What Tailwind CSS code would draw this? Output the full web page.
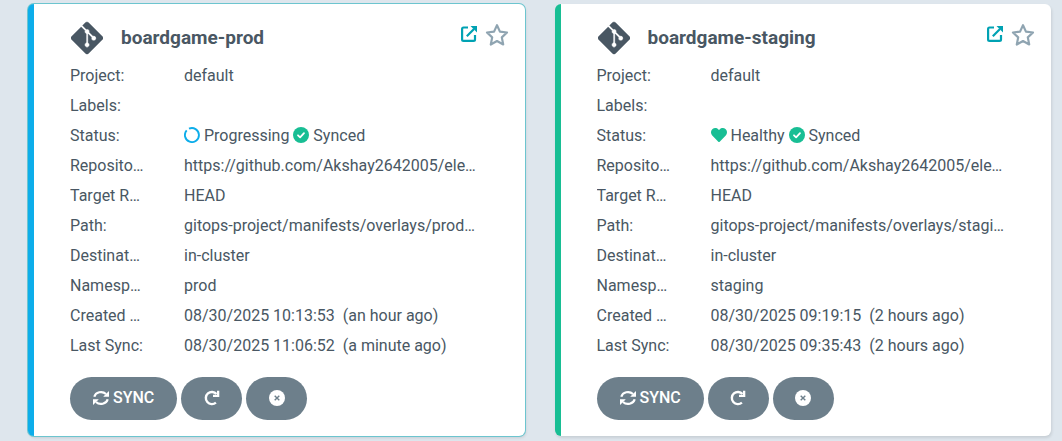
<!DOCTYPE html>
<html lang="en">
<head>
<meta charset="utf-8">
<meta name="viewport" content="width=device-width, initial-scale=1">
<title>Applications</title>
<script src="https://cdn.jsdelivr.net/npm/@tailwindcss/browser@4"></script>
</head>
<body class="min-h-screen bg-[#dee6ed] font-['Roboto',sans-serif] text-base text-[#495763]">
<svg class="hidden" aria-hidden="true">
  <symbol id="git" viewBox="0 32 448 448"><path fill="currentColor" stroke="currentColor" stroke-width="6" d="M439.55 236.05L244 40.45a28.87 28.87 0 0 0-40.81 0l-40.66 40.63 51.52 51.52c27.06-9.14 52.68 16.77 43.39 43.68l49.66 49.66c34.23-11.8 61.18 31 35.47 56.69-26.49 26.49-70.21-2.87-56-37.34L240.22 199v121.85c25.3 12.54 22.26 41.85 9.08 55a34.34 34.34 0 0 1-48.55 0c-17.57-17.6-11.07-46.91 11.25-56v-123c-20.8-8.51-24.6-30.74-18.64-45L142.57 101 8.45 235.14a28.86 28.86 0 0 0 0 40.81l195.61 195.6a28.86 28.86 0 0 0 40.8 0l194.69-194.69a28.86 28.86 0 0 0 0-40.81z"/></symbol>
  <symbol id="external" viewBox="0 0 16 16"><path fill="none" stroke="currentColor" stroke-width="2.200" stroke-linejoin="round" d="M7 1.500H2.500Q1.100 1.500 1.100 3V13.500Q1.100 14.900 2.500 14.900H12.500Q14 14.900 14 13.500V9M5.800 10.200L13 3"/><path fill="currentColor" d="M9.500 0H16V6.500z"/></symbol>
  <symbol id="star" viewBox="0 0 22 22"><path fill="none" stroke="currentColor" stroke-width="2" stroke-linejoin="round" d="M11 2L13.700 7.900L20.200 8.700L15.400 13.200L16.700 19.700L11 16.500L5.300 19.700L6.600 13.200L1.800 8.700L8.300 7.900z"/></symbol>
  <symbol id="check" viewBox="0 0 16 16"><circle cx="8" cy="8" r="8" fill="currentColor"/><path fill="none" stroke="#fff" stroke-width="1.800" stroke-linecap="round" stroke-linejoin="round" d="M5 8.300L7.100 10.300L11 6.200"/></symbol>
  <symbol id="ring" viewBox="0 0 16 16"><path fill="none" stroke="currentColor" stroke-width="1.900" d="M5 1.700A7 7 0 1 1 2.700 3.400"/></symbol>
  <symbol id="heart" viewBox="0 32 512 448"><path fill="currentColor" d="M462.300 62.600C407.500 15.900 326 24.300 275.700 76.200L256 96.500l-19.700-20.300C186.100 24.300 104.500 15.900 49.700 62.600c-62.800 53.600-66.100 149.800-9.900 207.900l193.500 199.800c12.500 12.900 32.800 12.900 45.300 0l193.500-199.800c56.300-58.100 53-154.300-9.800-207.900z"/></symbol>
  <symbol id="sync" viewBox="0 0 16 16"><path fill="none" stroke="currentColor" stroke-width="2.200" d="M1.300 6.800A6.900 6.200 0 0 1 13 4M14.700 9.200A6.900 6.200 0 0 1 3 12"/><path fill="currentColor" d="M16 1V6.800H10.200zM0 15V9.200H5.800z"/></symbol>
  <symbol id="refresh" viewBox="0 0 16 16"><path fill="none" stroke="currentColor" stroke-width="2.400" d="M12.500 4A6.100 6.100 0 1 0 11.900 12.700"/><path fill="currentColor" d="M13 .8H15.300V7H9V4.800H13z"/></symbol>
  <symbol id="cancel" viewBox="0 0 16 16"><circle cx="8" cy="8" r="8" fill="currentColor"/><path stroke="#6d7f8b" stroke-width="1.400" d="M5.700 5.700L10.300 10.300M10.300 5.700L5.700 10.300"/></symbol>
</svg>

<main id="apps" class="grid grid-cols-2 gap-[30px] pt-1 pr-[11px] pb-1 pl-7"></main>

<template id="card">
  <article class="min-w-0 rounded-md border-l-6 bg-white pt-4 pr-4 pb-4 pl-9 shadow-[1px_2px_3px_rgba(0,0,0,0.1)]">
    <header class="flex items-center pb-1">
      <svg class="h-9 w-[34px] shrink-0 px-px"><use href="#git"/></svg>
      <h2 class="ml-[17px] flex-1 truncate text-[19px] leading-9 font-bold" data-f="name"></h2>
      <a href="#" aria-label="Open application" class="mb-2 text-[#00a2b3]"><svg class="size-4"><use href="#external"/></svg></a>
      <button type="button" aria-label="Add to favorites" class="mb-1.5 ml-2 text-[#8fa4b1]"><svg class="size-6"><use href="#star"/></svg></button>
    </header>
    <dl class="pt-px"></dl>
    <div class="mt-4 flex gap-1 text-white">
      <button type="button" class="flex h-[43px] items-center gap-1 rounded-full bg-[#6d7f8b] px-[23px] pb-0.5 font-medium"><svg class="size-4"><use href="#sync"/></svg>SYNC</button>
      <button type="button" aria-label="Refresh" class="flex h-[43px] w-[61px] items-center justify-center rounded-full bg-[#6d7f8b] pb-0.5"><svg class="size-4"><use href="#refresh"/></svg></button>
      <button type="button" aria-label="Delete" class="flex h-[43px] w-[61px] items-center justify-center rounded-full bg-[#6d7f8b] pb-0.5"><svg class="size-4"><use href="#cancel"/></svg></button>
    </div>
  </article>
</template>

<script>
const synced = '<svg class="mb-1 inline size-4 text-[#18be94]"><use href="#check"/></svg> Synced';
const apps = [
  { name: 'boardgame-prod', frame: 'border-[#0dadea] ring-1 ring-[#6cc5cf]', rows: [
    ['Project:', 'default'], ['Labels:', ''],
    ['Status:', '<svg class="mb-1 inline size-4 text-[#0dadea]"><use href="#ring"/></svg> Progressing ' + synced],
    ['Reposito…', 'https://github.com/Akshay2642005/ele…'], ['Target R…', 'HEAD'],
    ['Path:', 'gitops-project/manifests/overlays/prod…'], ['Destinat…', 'in-cluster'], ['Namesp…', 'prod'],
    ['Created …', '08/30/2025 10:13:53 &nbsp;(an hour ago)'], ['Last Sync:', '08/30/2025 11:06:52 &nbsp;(a minute ago)']] },
  { name: 'boardgame-staging', frame: 'border-[#18be94]', rows: [
    ['Project:', 'default'], ['Labels:', ''],
    ['Status:', '<svg class="mb-1 inline size-4 text-[#18be94]"><use href="#heart"/></svg> Healthy ' + synced],
    ['Reposito…', 'https://github.com/Akshay2642005/ele…'], ['Target R…', 'HEAD'],
    ['Path:', 'gitops-project/manifests/overlays/stagi…'], ['Destinat…', 'in-cluster'], ['Namesp…', 'staging'],
    ['Created …', '08/30/2025 09:19:15 &nbsp;(2 hours ago)'], ['Last Sync:', '08/30/2025 09:35:43 &nbsp;(2 hours ago)']] }
];
for (const app of apps) {
  const node = document.getElementById('card').content.cloneNode(true);
  node.querySelector('article').className += ' ' + app.frame;
  node.querySelector('[data-f=name]').textContent = app.name;
  node.querySelector('dl').innerHTML = app.rows.map(([k, v]) =>
    `<div class="flex h-[30px] items-center"><dt class="w-[75px] shrink-0 truncate">${k}</dt><dd class="mr-6 ml-[39px] min-w-0 flex-1 truncate">${v}</dd></div>`).join('');
  document.getElementById('apps').append(node);
}
</script>
</body>
</html>
